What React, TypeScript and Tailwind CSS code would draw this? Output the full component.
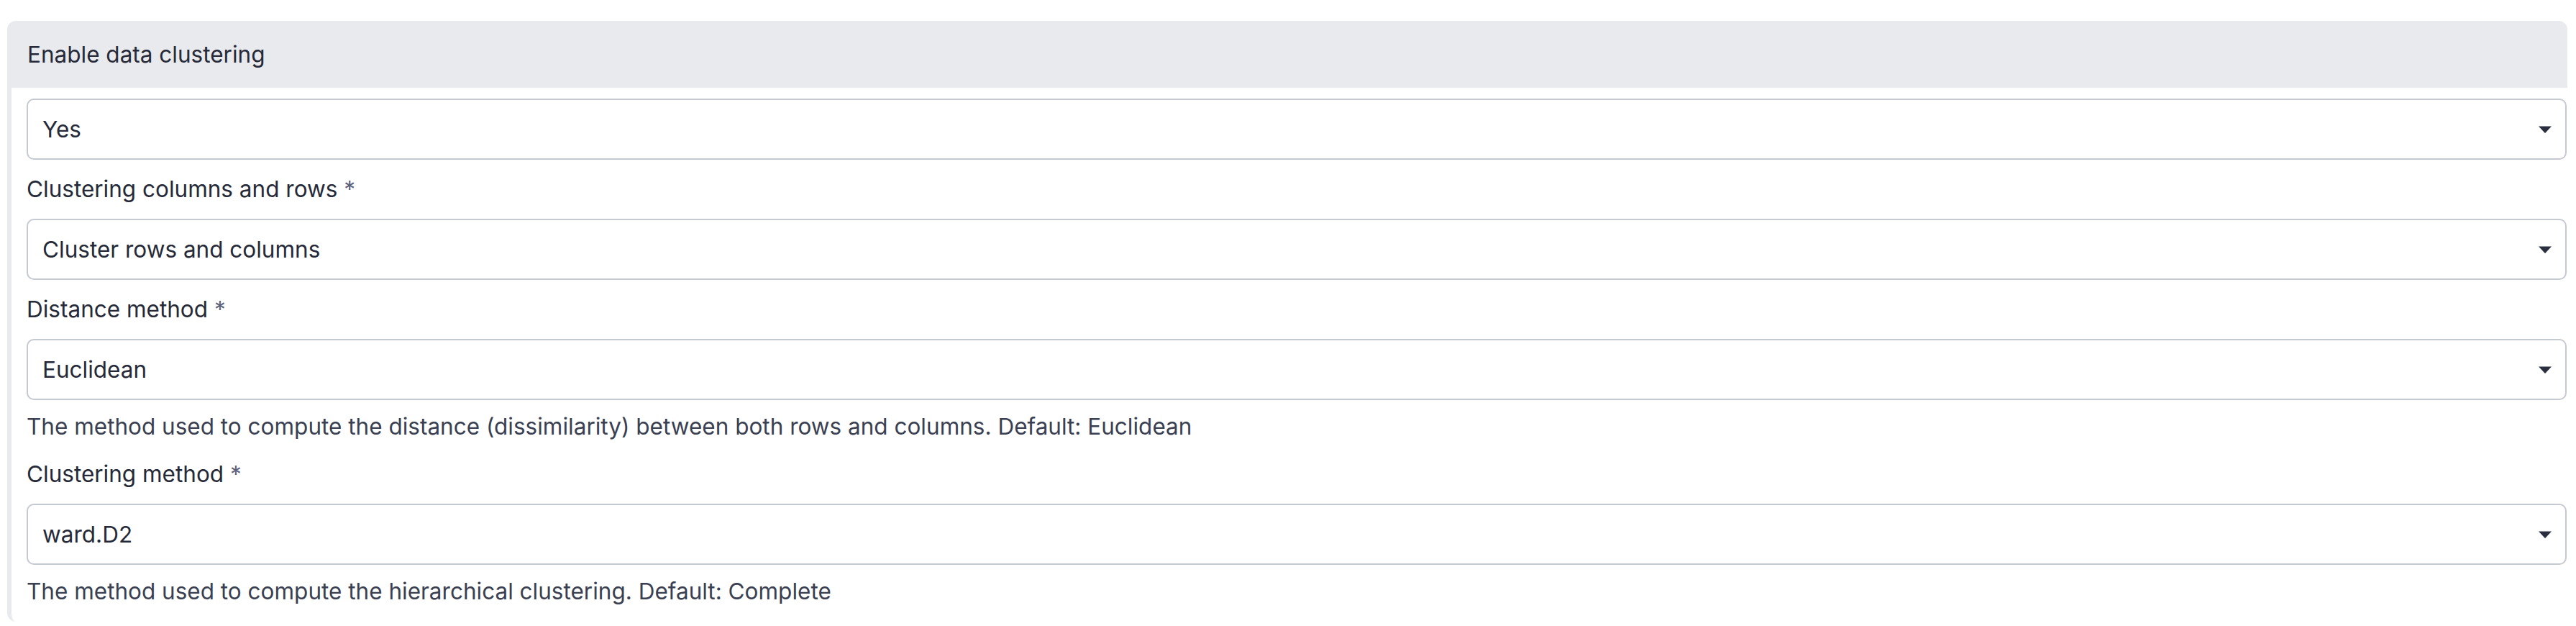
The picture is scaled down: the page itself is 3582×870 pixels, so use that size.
import React from "react";

const fields = [
  { label: "Clustering columns and rows", value: "Cluster rows and columns" },
  {
    label: "Distance method",
    value: "Euclidean",
    help: "The method used to compute the distance (dissimilarity) between both rows and columns. Default: Euclidean",
  },
  {
    label: "Clustering method",
    value: "ward.D2",
    help: "The method used to compute the hierarchical clustering. Default: Complete",
  },
];

const Select = ({ value }: { value: string }) => (
  <div className="relative flex h-[85px] w-full items-center rounded-[10px] border-2 border-[#c5c9d1] bg-white pl-[20px] pr-[60px] text-[31.5px] text-[#262a38]">
    {value}
    <svg
      className="pointer-events-none absolute right-[18px] top-1/2 -translate-y-1/2"
      width="20"
      height="11"
      viewBox="0 0 20 11"
    >
      <path d="M1 1h18L10.6 10a0.8 0.8 0 0 1-1.2 0Z" fill="#2a2e3e" />
    </svg>
  </div>
);

export default function App() {
  return (
    <div
      className="min-h-screen w-full bg-white pt-[29px] pl-[10px] pr-[12px]"
      style={{ fontFamily: "Inter, 'Noto Sans', sans-serif" }}
    >
      <div className="overflow-hidden rounded-[12px]">
        {/* Panel header */}
        <div className="flex h-[93px] items-center bg-[#e9eaee] pl-[28px] text-[31.5px] text-[#262a38]">
          Enable data clustering
        </div>

        {/* Panel body */}
        <div className="flex flex-col rounded-bl-[12px] border-l-[6px] border-[#e9eaee] pt-[15px] pb-[22px] pl-[21px] pr-px">
          <Select value="Yes" />
          {fields.map((f, i) => (
            <div key={f.label} className="flex flex-col">
              <label
                className={`${i === 2 ? "mt-[26px]" : "mt-[21px]"} mb-[21px] h-[40px] text-[31.5px] leading-[40px] text-[#262a38]`}
              >
                {f.label} <span className="text-[#5b6179]">*</span>
              </label>
              <Select value={f.value} />
              {f.help && (
                <p className="mt-[17px] h-[40px] text-[31.5px] leading-[40px] text-[#3a3f52]">
                  {f.help}
                </p>
              )}
            </div>
          ))}
        </div>
      </div>
    </div>
  );
}
